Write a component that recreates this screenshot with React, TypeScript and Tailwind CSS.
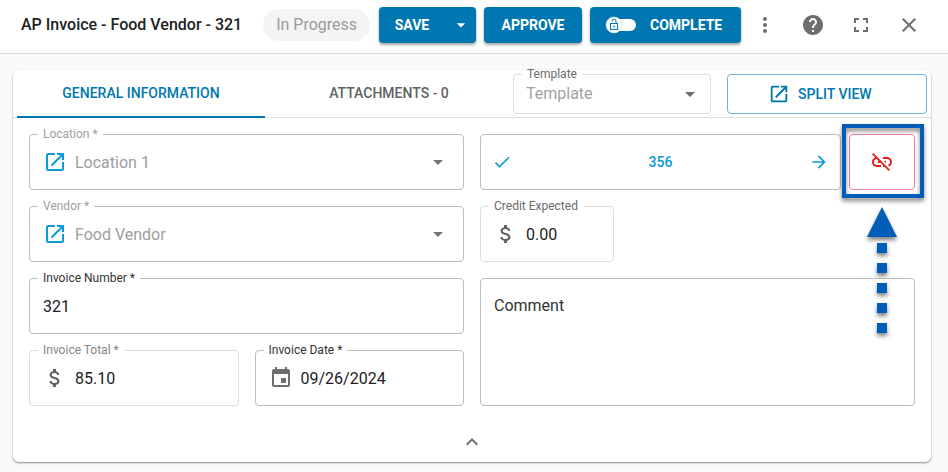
import type { ReactNode } from "react";
import {
  MdArrowDropDown,
  MdArrowForward,
  MdAttachMoney,
  MdCheck,
  MdClose,
  MdEvent,
  MdFullscreen,
  MdHelp,
  MdKeyboardArrowUp,
  MdLinkOff,
  MdMoreVert,
  MdOpenInNew,
} from "react-icons/md";

const headerActions = [
  { label: "More", icon: MdMoreVert },
  { label: "Help", icon: MdHelp },
  { label: "Fullscreen", icon: MdFullscreen },
  { label: "Close", icon: MdClose },
];

const inputClass = "w-full min-w-0 pt-0.5 text-base text-[#212121] outline-none";

type FieldProps = {
  id: string;
  label: string;
  border?: string;
  labelColor?: string;
  className?: string;
  children: ReactNode;
};

// Outlined field: the legend cuts the notch in the border
function Field({
  id,
  label,
  border = "border-[#bdbdbd]",
  labelColor = "text-[#9e9e9e]",
  className = "h-12 px-[13px]",
  children,
}: FieldProps) {
  return (
    <fieldset className={`min-w-0 rounded border pb-[3px] ${border}`}>
      <legend className={`ml-2 px-[5px] text-xs leading-2 ${labelColor}`}>
        <label htmlFor={id}>{label}</label>
      </legend>
      <div className={`flex items-center gap-2 ${className}`}>{children}</div>
    </fieldset>
  );
}

function LockToggle() {
  return (
    <svg width="32" height="18" viewBox="0 0 32 18" aria-hidden="true">
      <rect x="3" y="3" width="28" height="12" rx="6" fill="#fff" />
      <circle cx="9" cy="9" r="8" fill="#fff" stroke="#c9dde8" strokeWidth="0.6" />
      <rect x="5.5" y="7.5" width="7" height="6" fill="none" stroke="#0077b0" />
      <path d="M7 5.5V5a2 2 0 0 1 4 0v2.5" fill="none" stroke="#0077b0" />
      <rect x="8.2" y="9.7" width="1.6" height="1.6" fill="#0077b0" />
    </svg>
  );
}

function Header() {
  return (
    <header className="flex h-[54px] items-center border-b border-[#dcdcdc] bg-white pr-[15px] pb-[3px] pl-[21px]">
      <h1 className="mr-[21px] whitespace-nowrap text-base font-medium text-[#212121]">AP Invoice - Food Vendor - 321</h1>
      <span className="flex h-8 items-center whitespace-nowrap rounded-full bg-[#f4f4f4] px-[13px] text-base text-[#9b9b9b]">
        In Progress
      </span>
      <div className="ml-auto flex items-center gap-2 text-sm font-bold text-white">
        <div className="flex h-9 rounded bg-[#0077b0] shadow-[0_2px_3px_rgba(0,0,0,0.35)]">
          <button type="button" className="w-[66px]">SAVE</button>
          <button type="button" aria-label="More save options" className="flex w-[31px] items-center justify-center">
            <MdArrowDropDown size={20} />
          </button>
        </div>
        <button type="button" className="h-9 w-[98px] rounded bg-[#0077b0] shadow-[0_2px_3px_rgba(0,0,0,0.35)]">
          APPROVE
        </button>
        <button
          type="button"
          className="flex h-9 w-[151px] items-center gap-[13px] rounded bg-[#0077b0] pl-[15px] shadow-[0_2px_3px_rgba(0,0,0,0.35)]"
        >
          <LockToggle />
          COMPLETE
        </button>
      </div>
      <div className="flex text-[#6e6e6e]">
        {headerActions.map(({ label, icon: Icon }) => (
          <button key={label} type="button" aria-label={label} className="flex size-12 items-center justify-center">
            <Icon size={24} />
          </button>
        ))}
      </div>
    </header>
  );
}

function Toolbar() {
  return (
    <div className="flex h-12 items-start border-b border-[#dcdcdc] px-1">
      <button type="button" className="h-12 flex-1 border-b-2 border-[#0077b0] text-sm font-medium text-[#0077b0]">
        GENERAL INFORMATION
      </button>
      <button type="button" className="h-12 flex-1 border-b-2 border-transparent text-sm font-medium text-[#616161]">
        ATTACHMENTS - 0
      </button>
      <div className="w-[198px]">
        <Field
          id="template"
          label="Template"
          border="border-[#dedede]"
          labelColor="text-[#6b6b6b]"
          className="h-8 pr-2 pl-3"
        >
          <select id="template" defaultValue="" className="min-w-0 flex-1 appearance-none text-base text-[#a3a3a3]">
            <option value="">Template</option>
          </select>
          <MdArrowDropDown size={24} className="text-[#6b6b6b]" />
        </Field>
      </div>
      <button
        type="button"
        className="mt-1 ml-4 flex h-10 w-[200px] items-center gap-2 rounded border border-[#6fb3d3] pl-10 text-sm font-medium text-[#0077b0]"
      >
        <MdOpenInNew size={22} />
        SPLIT VIEW
      </button>
    </div>
  );
}

function LinkedSelect({ id, label, value }: { id: string; label: string; value: string }) {
  return (
    <Field id={id} label={label}>
      <button type="button" aria-label={`Open ${value}`} className="text-[#0a9bd8]">
        <MdOpenInNew size={24} />
      </button>
      <select id={id} disabled className="min-w-0 flex-1 appearance-none pt-0.5 text-base text-[#9e9e9e] opacity-100">
        <option>{value}</option>
      </select>
      <MdArrowDropDown size={24} className="text-[#757575]" />
    </Field>
  );
}

// Frame and dashed arrow that point at the unlink button
function Callout() {
  return (
    <>
      <div className="pointer-events-none absolute -top-[10px] -right-[9px] -bottom-2 -left-[7px] border-4 border-[#005eb8] drop-shadow-[0_3px_2px_rgba(0,0,0,0.5)]" />
      <svg
        className="pointer-events-none absolute top-[73px] left-[18px] drop-shadow-[0_3px_2px_rgba(0,0,0,0.5)]"
        width="30"
        height="128"
        viewBox="0 0 30 128"
        fill="#005eb8"
        aria-hidden="true"
      >
        <path d="M15 0L30 30H0Z" />
        <path d="M10 36h10v10H10zM10 56h10v10H10zM10 76h10v10H10zM10 96h10v10H10zM10 116h10v10H10z" />
      </svg>
    </>
  );
}

function App() {
  return (
    <div className="min-h-screen bg-[#fafafa] font-['Roboto','Liberation_Sans',sans-serif]">
      <Header />
      <main className="mt-4 mr-[17px] ml-[13px] rounded-md bg-white shadow-[0_1px_2px_rgba(0,0,0,0.45)]">
        <Toolbar />
        <form className="grid grid-cols-2 gap-x-4 px-4 pt-3">
          <div className="flex min-w-0 flex-col gap-3">
            <LinkedSelect id="location" label="Location *" value="Location 1" />
            <LinkedSelect id="vendor" label="Vendor *" value="Food Vendor" />
            <Field id="invoice-number" label="Invoice Number *" labelColor="text-[#333333]">
              <input id="invoice-number" defaultValue="321" className={inputClass} />
            </Field>
            <div className="grid grid-cols-2 gap-4">
              <Field id="invoice-total" label="Invoice Total *" border="border-[#dedede]" labelColor="text-[#858585]">
                <MdAttachMoney size={24} className="shrink-0 text-[#616161]" />
                <input id="invoice-total" defaultValue="85.10" className={inputClass} />
              </Field>
              <Field id="invoice-date" label="Invoice Date *" labelColor="text-[#333333]">
                <MdEvent size={24} className="shrink-0 text-[#6e6e6e]" />
                <input id="invoice-date" defaultValue="09/26/2024" className={inputClass} />
              </Field>
            </div>
          </div>

          <div className="flex min-w-0 flex-col gap-3">
            <div className="mt-1 flex gap-2">
              <button
                type="button"
                className="flex h-14 flex-1 items-center justify-between rounded border border-[#bdbdbd] px-[11px] text-sm font-medium text-[#0a9bd8]"
              >
                <MdCheck size={20} />
                356
                <MdArrowForward size={20} />
              </button>
              <div className="relative">
                <button
                  type="button"
                  aria-label="Unlink"
                  className="flex h-14 w-[66px] items-center justify-center rounded border border-[#f27ba5] text-[#e2211c]"
                >
                  <MdLinkOff size={24} />
                </button>
                <Callout />
              </div>
            </div>
            <div className="w-[134px]">
              <Field id="credit" label="Credit Expected" border="border-[#dedede]" labelColor="text-[#6b6b6b]">
                <MdAttachMoney size={24} className="shrink-0 text-[#616161]" />
                <input id="credit" defaultValue="0.00" className={inputClass} />
              </Field>
            </div>
            <textarea
              aria-label="Comment"
              placeholder="Comment"
              className="mt-1 block h-32 w-full resize-none rounded border border-[#bdbdbd] px-[13px] py-[15px] text-base text-[#212121] outline-none placeholder:text-[#333333]"
            />
          </div>
        </form>
        <div className="flex justify-center pt-6 pb-2">
          <button type="button" aria-label="Collapse" className="text-[#6e6e6e]">
            <MdKeyboardArrowUp size={24} />
          </button>
        </div>
      </main>
    </div>
  );
}

export default App;
